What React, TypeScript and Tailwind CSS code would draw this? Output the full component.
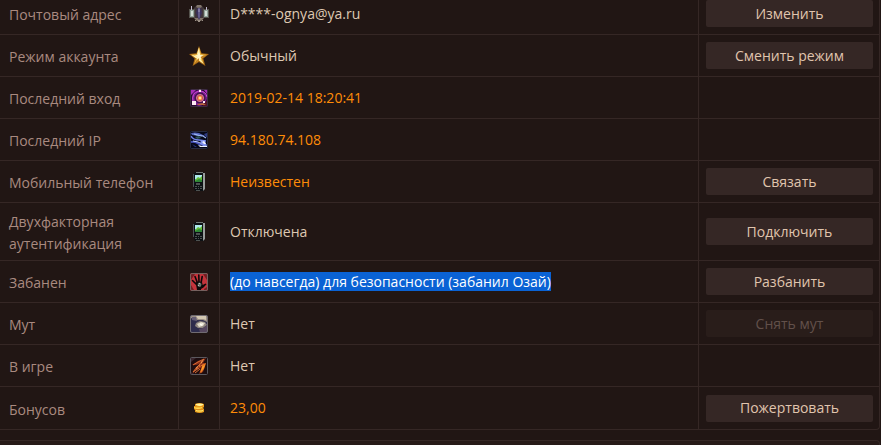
import React from 'react';
import clsx from 'clsx';

type IconName = 'crest' | 'star' | 'portal' | 'storm' | 'phone' | 'hand' | 'mute' | 'flame' | 'coins';

interface AccountRow {
  label: string;
  icon: IconName;
  value: string;
  tone?: 'accent' | 'selected';
  action?: string;
  disabled?: boolean;
}

const rows: AccountRow[] = [
  { label: 'Почтовый адрес', icon: 'crest', value: 'D****-ognya@ya.ru', action: 'Изменить' },
  { label: 'Режим аккаунта', icon: 'star', value: 'Обычный', action: 'Сменить режим' },
  { label: 'Последний вход', icon: 'portal', value: '2019-02-14 18:20:41', tone: 'accent' },
  { label: 'Последний IP', icon: 'storm', value: '94.180.74.108', tone: 'accent' },
  { label: 'Мобильный телефон', icon: 'phone', value: 'Неизвестен', tone: 'accent', action: 'Связать' },
  { label: 'Двухфакторная аутентификация', icon: 'phone', value: 'Отключена', action: 'Подключить' },
  {
    label: 'Забанен',
    icon: 'hand',
    value: '(до навсегда) для безопасности (забанил Озай)',
    tone: 'selected',
    action: 'Разбанить',
  },
  { label: 'Мут', icon: 'mute', value: 'Нет', action: 'Снять мут', disabled: true },
  { label: 'В игре', icon: 'flame', value: 'Нет' },
  { label: 'Бонусов', icon: 'coins', value: '23,00', tone: 'accent', action: 'Пожертвовать' },
];

// All drawings share a 20x20 grid
const drawings: Record<IconName, React.ReactNode> = {
  crest: (
    <>
      <path d="M5 4 8 1h4l3 3 1 5-2 6-4 3-4-3-2-6z" fill="#40363b" />
      <path d="M7 3 8 1h4l1 2-2 1H9zM5 14l3 3h4l3-3-2 0H7z" fill="#81756a" />
      <path d="M9 16h2v2H9zM6 16h1v1H6zM13 16h1v1h-1z" fill="#9a8e85" />
      <path d="M8 5q2-3 4 0l1 4-3 7-3-7z" fill="#39315b" />
      <path d="M9 4h2v9l-1 2-1-2z" fill="#625a88" />
      <path d="M9.500 5h1v3h-1z" fill="#9d95b8" />
      <path d="M0 5h6v9H0zM14 5h6v9h-6z" fill="#55534d" />
      <path d="M1 6h4v7H1zM15 6h4v7h-4z" fill="#93a59b" />
      <path d="M2 7h2v5H2zM16 7h2v5h-2z" fill="#d2ddd6" />
      <path d="M2 2h1v4H2zM17 3h1v3h-1z" fill="#c5bdd2" />
    </>
  ),
  star: (
    <>
      <path d="m10 0 2.6 7.2L20 8l-5.7 4.6L16.4 20 10 16l-6.4 4 2-7.4L0 8l7.4-.8z" fill="#a96a13" />
      <path d="m10 1.5 2 6.4 5.7.8-4.8 3.6 1.8 5.7-4.7-3.5L5 18l2.1-5.7-4.8-3.6 5.8-.8z" fill="#ebb642" />
      <path d="m10 1.5 1 8.1-1 1.4-2-3.1zM2.3 8.700 10 11l-2.900 1.300zM10 11l4.700 7-4.700-3.500z" fill="#fff2ae" />
      <path d="m17.700 8.700-4.800 3.600L10 11zM5 18l5-7v3.500z" fill="#bd7c20" />
      <path d="m10 6 1.300 3 3 .2-2.600 1.900.5 2.600-2.200-1.400-2.100 1.400.5-2.600-2.600-1.900 3-.2z" fill="#fff6c8" />
    </>
  ),
  portal: (
    <>
      <rect x="1" y="1" width="18" height="18" rx="1" fill="#250c30" />
      <path d="M3 9q0-6 8-7 7 1 7 8-1 7-8 8-7-1-7-9z" fill="#7b1c92" />
      <path d="M4 14Q2 5 10 3q7 0 8 6" fill="none" stroke="#c84bd2" />
      <circle cx="11" cy="10" r="5" fill="#5a1a66" stroke="#351344" />
      <circle cx="11" cy="10" r="3.500" fill="#b44652" stroke="#dd7d93" />
      <circle cx="11" cy="10" r="2.200" fill="#ff9c45" />
      <circle cx="11" cy="10" r="1.100" fill="#fff1bd" />
      <path d="M2 2h5L2 7zM15 2h3v4z" fill="#a62cb8" />
      <path d="m14 17 4-5v6h-4z" fill="#541324" />
      <path d="m8 16 6-1 3 2H9z" fill="#b7653b" />
      <path d="M10 1h2v3h-2zM3 13h4v4H3zM14 13h2v2h-2z" fill="#ffe9f5" />
      <rect x="1.500" y="1.500" width="17" height="17" rx="1" fill="none" stroke="#443549" strokeOpacity=".8" />
    </>
  ),
  storm: (
    <>
      <rect x="1" y="1" width="18" height="18" rx="1" fill="#060818" />
      <path d="M2 3q4-1 8 0l6 3-6 0-7-1z" fill="#5364b8" />
      <path d="M2 6q2 4 8 4l7 1" fill="none" stroke="#6f83e8" strokeWidth="1.600" />
      <path d="M5 4q6 2 9 2l3 2" fill="none" stroke="#9db8f2" strokeWidth="1.200" />
      <path d="m6 7 4-1 2 2-4 1z" fill="#31565c" />
      <path d="M2 12q4-1 8 2l7 1" fill="none" stroke="#4250b8" strokeWidth="2" />
      <path d="m4 11 5 1 4 2 3-1" fill="none" stroke="#bdccff" />
      <path d="m12 10 4 0 1 4 1 1-1 2h-5l2-2-3-1z" fill="#8293f0" />
      <path d="m13 12 2-1 2 3-2 0zM9 15l4 1h5v1h-7z" fill="#f0f4ff" />
      <path d="m3 14 5 3H6zM15 4l2 3 1 0V3z" fill="#2e3b85" />
      <rect x="1.500" y="1.500" width="17" height="17" rx="1" fill="none" stroke="#30344a" strokeOpacity=".8" />
    </>
  ),
  phone: (
    <>
      <path d="M6 0h8l1 1v18H6l-1-2V2z" fill="#0d1114" />
      <path d="M14 1h2v16l-2 2z" fill="#989c9b" />
      <path d="M4 2h1v13H4z" fill="#4b5255" />
      <path d="M7 0h7v1H7z" fill="#737876" />
      <path d="M6 3h7v7H6z" fill="#2889c6" />
      <path d="M6 3h7v2L8 8 6 7z" fill="#afe9ed" />
      <path d="m6 8 3-3 2 1 2-2v6H6z" fill="#65bd35" />
      <path d="m6 9 4-2 3 1v2H6z" fill="#2d8436" />
      <path
        d="M7 11h4v2H7zM6 14h2v1H6zM9 14h1v1H9zM11 14h2v1h-2zM6 16h2v1H6zM9 16h1v1H9zM11 16h2v1h-2zM7 18h4v1H7z"
        fill="#4d5251"
      />
    </>
  ),
  hand: (
    <>
      <rect x="1" y="1" width="18" height="18" rx="2" fill="#c4343c" />
      <path d="M2 2h4L2 8zM14 2h4v6zM2 13l3 5H2zM15 17l3-2v3h-3z" fill="#751e23" />
      <path
        d="M3.500 8.500 7 12M6 4.500 8.500 11M9.800 3 10 10M13.200 4.500 12 11"
        fill="none"
        stroke="#0b0909"
        strokeWidth="1.600"
        strokeLinecap="round"
      />
      <path d="m6.500 10.500 3-1 3.500.5.700 3 2.800-1.500 1 .7-3 3.300-2.500 1.500V18H8l-.5-3z" fill="#0b0909" />
      <path d="m9 11 2-.5 1.500 1.500-.5 2.500-2 .5-1.500-1.500z" fill="#68716c" />
      <path d="M10 11h1v1h-1zM9 13h1v1H9z" fill="#bbbdb5" />
      <rect x="1.500" y="1.500" width="17" height="17" rx="1.500" fill="none" stroke="#75605e" />
    </>
  ),
  mute: (
    <>
      <rect x="1" y="1" width="18" height="18" rx="2" fill="#373450" />
      <path d="M2 2h16v6l-4-2-6 0-6-2z" fill="#9b8f85" />
      <path d="M7 2h10v4l-3-1H9z" fill="#d3c7b2" />
      <path d="M2 5q4 1 6 3l-1 4 4 5-2 1H2z" fill="#2d2b4c" />
      <path d="M3 3h4l1 4-5-1z" fill="#655d75" />
      <path d="m7 9 4-2 5 1 2 3-4 3H9l-3-2z" fill="#8f8680" />
      <path d="m8 10 4-2 4 1-2 3-4 1z" fill="#ded9c9" />
      <path d="m11 9 1 1 2-1-1 3-2-1z" fill="#fffdf0" />
      <path d="m10 15 4-1 4-3v7h-7z" fill="#56475f" />
      <rect x="1.500" y="1.500" width="17" height="17" rx="1.500" fill="none" stroke="#706b71" />
    </>
  ),
  flame: (
    <>
      <rect x="1" y="1" width="18" height="18" rx="1" fill="#1c0d10" />
      <path d="m3 9 6-4 8-3-3 5 3 0-3 9-4 2 2-6-3 1-6 5 4-7 4-3-4 1z" fill="#882d18" />
      <path d="m4 9 5-3 6-3-4 5-1 3 5-3M4 16l4-5 3-3M4 16l6-4M6 17l5-4" fill="none" stroke="#d36a32" />
      <path d="m13 9 4-2-2 6-3 4-1-1 2-4z" fill="#e97a20" />
      <path d="m13 11 3-2-2 4-2 2z" fill="#ff9f2b" />
      <path d="m12 6 3-3-3 5zM7 12l2-2-1 3z" fill="#ffa65b" />
      <path d="M2 2h5L2 6zM2 16l3 2H2z" fill="#3b262e" />
      <rect x="1.500" y="1.500" width="17" height="17" rx="1" fill="none" stroke="#5b585e" />
    </>
  ),
  coins: (
    <>
      <path d="M6 6q4-2 9 0v3l-1 1 1 1v3q-4 2-9 0v-2l-1-1V8h1z" fill="#e79b1c" />
      <path d="M7 6q4-1 7 0v1q-3 2-7 0z" fill="#fff39b" />
      <path d="M5 9q4 1 8 0v1q-4 2-8 0z" fill="#ffd950" />
      <path d="M7 12q3 1 7 0v1q-3 1-7 0z" fill="#fff176" />
      <path d="M6 8q4 1 8 0v.500H6zM6 11h8v.500H7z" fill="#d67a18" />
    </>
  ),
};

const Icon: React.FC<{ name: IconName }> = ({ name }) => (
  <svg viewBox="0 0 20 20" className="mx-auto block size-5" aria-hidden="true">
    {drawings[name]}
  </svg>
);

const cell = 'border-r border-b border-[#352725]';

const AccountTable: React.FC = () => (
  <table className="w-full table-fixed border-separate border-spacing-0 text-sm">
    <colgroup>
      <col className="w-[179px]" />
      <col className="w-[41px]" />
      <col />
      <col className="w-[181px]" />
    </colgroup>
    <tbody>
      {rows.map((row) => (
        <tr key={row.label} className="group h-[42px] last:h-[43px]">
          <th scope="row" className={clsx(cell, 'pt-2 pr-2 pb-[5px] pl-[9px] text-left leading-[22px] font-normal text-[#a98a80]')}>
            {row.label}
          </th>
          <td className={clsx(cell, 'p-0')}>
            <Icon name={row.icon} />
          </td>
          <td className={clsx(cell, 'px-[10px] py-0', row.tone === 'accent' ? 'text-[#ff8c08]' : 'text-[#dec8b2]')}>
            {row.tone === 'selected' ? <mark className="bg-[#0a62d4] text-white">{row.value}</mark> : row.value}
          </td>
          <td className={clsx(cell, 'py-0 pr-[6px] pl-[7px] group-last:rounded-br-sm')}>
            {row.action && (
              <button
                type="button"
                disabled={row.disabled}
                className="block h-[27px] w-full cursor-pointer rounded-xs bg-[#352725] text-[#e0c5ae] hover:bg-[#402f2c] disabled:cursor-default disabled:bg-[#291d1a] disabled:text-[#62504a]"
              >
                {row.action}
              </button>
            )}
          </td>
        </tr>
      ))}
    </tbody>
  </table>
);

export default function App() {
  return (
    <div className="min-h-screen overflow-hidden bg-[#211614] pr-px font-['Open_Sans','Noto_Sans',sans-serif]">
      {/* The list is scrolled slightly past its top edge */}
      <main className="-mt-[7px]">
        <AccountTable />
        <section className="mt-[10px] h-[5px] rounded-tr-sm border-t border-r border-[#352725] bg-[#271a18]" />
      </main>
    </div>
  );
}
